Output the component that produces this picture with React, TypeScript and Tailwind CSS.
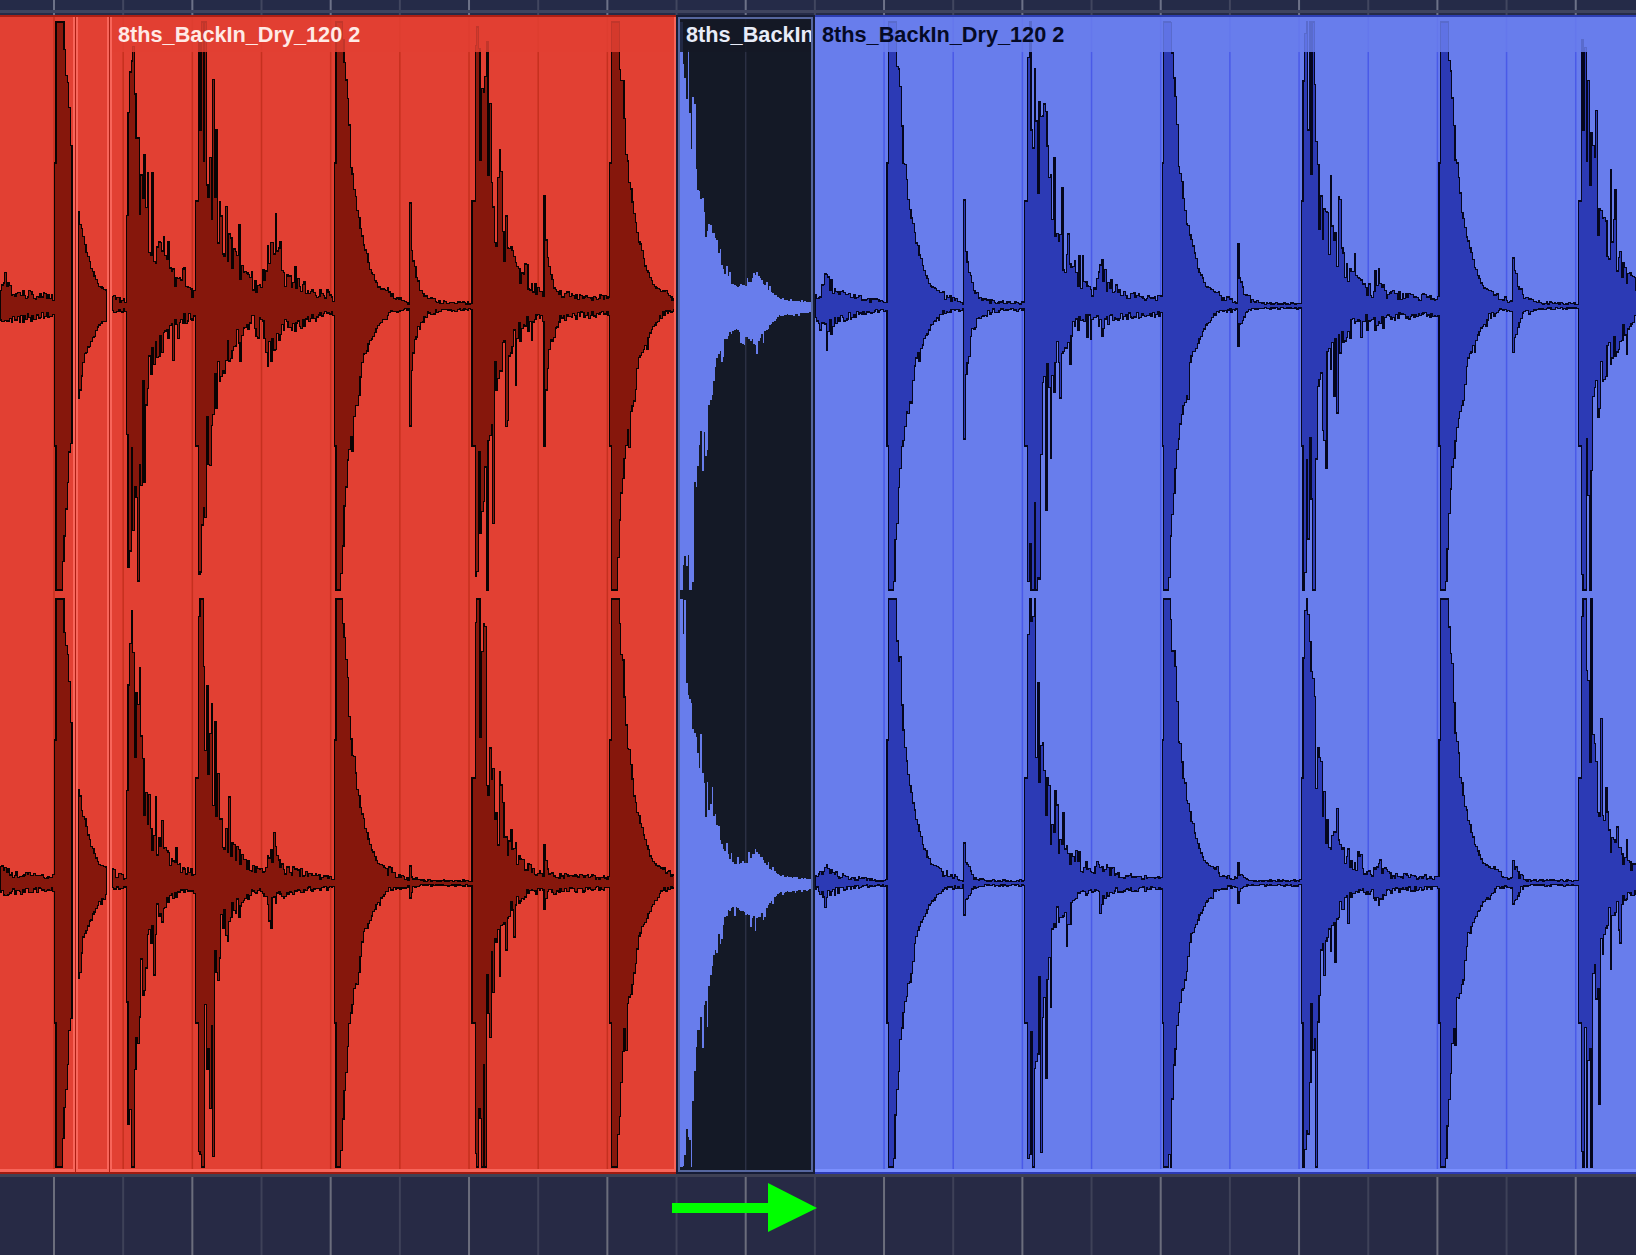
import React from "react";

// all wave coordinates are page pixels, the svg viewBox maps them onto each clip
const CENTERS = [306, 883];
const MAX_AMP = 284;
const GRID = Array.from({ length: 24 }, (_, i) => 54 + i * 69.17);

type Table = [number, number][];
type Kind = "kick" | "hit" | "spike" | "burst";
type Ev = { x: number; kind: Kind; amp: [number, number, number, number] };

const KICK_UP: Table = [[0, 143], [1.9, 143], [2, 284], [9, 284], [10, 250], [14, 215], [17, 147], [20, 127], [24, 92], [29, 67], [37, 37], [44, 20], [64, 8], [75, 4]];
const KICK_DOWN: Table = [[0, 140], [1.9, 140], [2, 284], [7, 284], [9, 243], [14, 160], [18, 120], [25, 93], [29, 53], [35, 40], [44, 20], [57, 6], [75, 4]];
const HIT_UP: Table = [[0, 105], [2.9, 105], [3, 225], [5, 284], [8, 284], [9, 235], [12, 200], [16, 150], [20, 115], [28, 85], [38, 60], [50, 35], [70, 14], [100, 11], [139, 8]];
const HIT_DOWN: Table = [[0, 140], [2.9, 140], [3, 284], [5, 262], [14, 160], [18, 125], [25, 80], [31, 60], [42, 40], [49, 24], [57, 15], [139, 8]];
const SPIKE: Table = [[0, 1], [1.5, 1], [1.6, 0.6], [3, 0.45], [8, 0.22], [15, 0.09], [30, 0.04], [63, 0.03]];
const BURST: Table = [[-12, 0.2], [-3, 0.6], [0, 1], [5, 0.65], [15, 0.35], [30, 0.25], [50, 0.16], [62, 0.1]];

const full: [number, number, number, number] = [1, 1, 1, 1];

const RED_EVENTS: Ev[] = [
  { x: -60, kind: "hit", amp: full },
  { x: 54, kind: "kick", amp: full },
  { x: 125, kind: "hit", amp: [0.86, 0.92, 0.88, 0.85] },
  { x: 194, kind: "hit", amp: full },
  { x: 270, kind: "burst", amp: [100, 65, 45, 32] },
  { x: 333, kind: "kick", amp: full },
  { x: 409, kind: "spike", amp: [103, 120, 17, 15] },
  { x: 471, kind: "hit", amp: full },
  { x: 544, kind: "spike", amp: [110, 140, 38, 26] },
  { x: 609, kind: "kick", amp: full },
];

const BLUE_EVENTS: Ev[] = [
  { x: 825, kind: "burst", amp: [35, 37, 22, 18] },
  { x: 886, kind: "kick", amp: full },
  { x: 963, kind: "spike", amp: [106, 133, 40, 32] },
  { x: 1024, kind: "hit", amp: full },
  { x: 1100, kind: "burst", amp: [43, 27, 30, 22] },
  { x: 1161, kind: "kick", amp: full },
  { x: 1236, kind: "spike", amp: [62, 40, 20, 20] },
  { x: 1300, kind: "hit", amp: full },
  { x: 1376, kind: "burst", amp: [30, 30, 22, 20] },
  { x: 1438, kind: "kick", amp: full },
  { x: 1511, kind: "spike", amp: [80, 77, 38, 35] },
  { x: 1577, kind: "hit", amp: full },
];

// the inverted piece under the selection, heights away from the centre line
const FADE_UP: Table = [[676, 284], [682, 284], [685, 200], [688, 196], [692, 161], [695, 151], [698, 116], [703, 111], [705, 71], [708, 81], [717, 61], [720, 40], [733, 19], [747, 21], [755, 34], [767, 16], [780, 6], [793, 4], [815, 3]];
const FADE_DOWN: Table = [[676, 284], [682, 284], [688, 261], [694, 194], [697, 154], [703, 121], [710, 101], [716, 54], [728, 27], [735, 24], [756, 37], [763, 27], [778, 9], [812, 5], [815, 4]];

function lookup(table: Table, x: number) {
  if (x < table[0][0] || x > table[table.length - 1][0]) return 0;
  for (let i = 1; i < table.length; i++) {
    const [x1, y1] = table[i - 1];
    const [x2, y2] = table[i];
    if (x <= x2) return y1 + ((y2 - y1) * (x - x1)) / (x2 - x1);
  }
  return 0;
}

function seeded(seed: number) {
  let a = seed;
  return () => {
    a = (a + 0x6d2b79f5) | 0;
    let t = Math.imul(a ^ (a >>> 15), 1 | a);
    t = (t + Math.imul(t ^ (t >>> 7), 61 | t)) ^ t;
    return ((t ^ (t >>> 14)) >>> 0) / 4294967296;
  };
}

function height(events: Ev[], x: number, ch: number, side: number): [number, Kind, number] {
  let best = 0;
  let kind: Kind = "burst";
  let at = 0;
  for (const ev of events) {
    const dx = x - ev.x;
    const idx = ch * 2 + side;
    let v = 0;
    if (ev.kind === "kick") v = lookup(side ? KICK_DOWN : KICK_UP, dx) * ev.amp[idx];
    if (ev.kind === "hit") {
      v = lookup(side ? HIT_DOWN : HIT_UP, dx) * ev.amp[idx];
      if (ch === 1 && dx > 25) v *= 0.68;
    }
    if (ev.kind === "spike") v = lookup(SPIKE, dx) * ev.amp[idx];
    if (ev.kind === "burst") v = lookup(BURST, dx) * ev.amp[idx];
    if (v > best) {
      best = v;
      kind = ev.kind;
      at = dx;
    }
  }
  return [best, kind, at];
}

function jag(v: number, kind: Kind, dx: number, side: number, r1: number, r2: number) {
  let out = Math.max(v, 2.5);
  if (out < 14) out *= 0.55 + r1 * 0.75;
  else if (kind === "burst") out *= r2 < 0.15 ? 1.2 + r1 * 0.3 : 0.5 + r1 * 0.6;
  else if (kind === "kick") {
    if (side && dx > 7 && r2 < 0.05) out *= 1.25;
    else out *= dx < 9 ? 1 : 0.95 + r1 * 0.1;
  } else if (kind === "hit") {
    if (dx > 5 && r2 < 0.2) out *= 1.25 + r1 * (side ? 1.2 : 0.7);
    else if (dx > 5 && r2 > 0.75) out *= 0.62;
    else if (dx > 5) out *= 0.9 + r1 * 0.2;
  } else if (dx > 3) out *= 0.8 + r1 * 0.4;
  return Math.min(out, MAX_AMP);
}

function wavePath(from: number, to: number, ch: number, amp: (x: number, side: number, r: () => number) => number) {
  const cy = CENTERS[ch];
  const r = seeded(from * 7 + ch * 131 + 5);
  const step = 1.6;
  const top: string[] = [];
  const bottom: string[] = [];
  for (let x = from; x < to; x += step) {
    const up = amp(x, 0, r);
    const down = amp(x, 1, r);
    top.push(`L${x.toFixed(2)} ${(cy - up).toFixed(1)} L${(x + step).toFixed(2)} ${(cy - up).toFixed(1)}`);
    bottom.unshift(`L${(x + step).toFixed(2)} ${(cy + down).toFixed(1)} L${x.toFixed(2)} ${(cy + down).toFixed(1)}`);
  }
  return `M${from} ${cy} ${top.join(" ")} ${bottom.join(" ")} Z`;
}

function eventAmp(events: Ev[], ch: number) {
  return (x: number, side: number, r: () => number) => {
    const [v, kind, dx] = height(events, x, ch, side);
    return jag(v, kind, dx, side, r(), r());
  };
}

function fadeAmp(x: number, side: number, r: () => number) {
  const v = lookup(side ? FADE_DOWN : FADE_UP, x);
  if (x < 682) return v;
  const a = r();
  const b = r();
  return Math.min(MAX_AMP, v * (b < 0.18 ? 1.3 : 0.9 + a * 0.15) + 1);
}

type ClipProps = {
  from: number;
  to: number;
  bg: string;
  grid: string;
  fill: string;
  stroke: string;
  ranges?: [number, number][];
  amp: (ch: number) => (x: number, side: number, r: () => number) => number;
  widthClass: string;
  frameClass: string;
  ringClass: string;
  stripClass?: string;
  labelClass?: string;
  label?: string;
};

function Clip(p: ClipProps) {
  const w = p.to - p.from;
  const ranges = p.ranges ?? [[p.from, p.to]];
  return (
    <div className={`relative shrink-0 h-full overflow-hidden ${p.widthClass} ${p.bg}`}>
      <svg className="absolute inset-0 w-full h-full" viewBox={`${p.from} 15 ${w} 1159`} preserveAspectRatio="none">
        {GRID.filter((g) => g > p.from && g < p.to).map((g) => (
          <rect key={g} x={g - 0.75} y={15} width={1.5} height={1159} fill={p.grid} />
        ))}
        {ranges.flatMap(([a, b]) =>
          CENTERS.map((_, ch) => (
            <path
              key={`${a}-${ch}`}
              d={wavePath(a, b, ch, p.amp(ch))}
              fill={p.fill}
              stroke={p.stroke}
              strokeWidth={p.stroke === "none" ? 0 : 1.3}
              shapeRendering="crispEdges"
            />
          ))
        )}
      </svg>
      {p.label && (
        <div className={`absolute inset-x-0 top-0 h-[37px] pt-[7px] overflow-hidden whitespace-nowrap text-[21.7px] leading-[26px] font-bold font-['Liberation_Sans',Arial,sans-serif] ${p.stripClass} ${p.labelClass}`}>
          {p.label}
        </div>
      )}
      <div className={`absolute inset-0 border-y-2 ${p.frameClass}`}>
        <div className={`w-full h-full ${p.ringClass}`} />
      </div>
    </div>
  );
}

function Ruler({ major, minor }: { major: string; minor: string }) {
  return (
    <svg className="absolute inset-0 w-full h-full" viewBox="0 0 1636 100" preserveAspectRatio="none">
      {GRID.map((g, i) => (
        <rect key={g} x={g - 1} y={0} width={2} height={100} fill={i % 2 === 0 ? major : minor} />
      ))}
    </svg>
  );
}

export default function App() {
  return (
    <div className="w-[1636px] h-[1255px] flex flex-col overflow-hidden bg-[#262a45]">
      {/* top ruler */}
      <div className="relative h-[15px] shrink-0 bg-[#252b48]">
        <Ruler major="#6d7288" minor="#41465f" />
        <div className="absolute inset-x-0 top-[10px] h-[3px] bg-[#3f445f]" />
      </div>

      {/* clips */}
      <div className="flex h-[1159px] shrink-0">
        <Clip
          from={0}
          to={75}
          ranges={[[0, 72]]}
          widthClass="w-[75px]"
          bg="bg-[#e24033]"
          grid="#c5301f"
          fill="#86170c"
          stroke="#0a0303"
          amp={(ch) => eventAmp(RED_EVENTS, ch)}
          frameClass="border-t-[#ab1f13] border-b-[#a01a10]"
          ringClass="border-b-[3px] border-r-2 border-r-[#f8655a] border-b-[#f8655a]"
        />
        <Clip
          from={75}
          to={110}
          ranges={[[78, 106]]}
          widthClass="w-[35px]"
          bg="bg-[#e24033]"
          grid="#c5301f"
          fill="#86170c"
          stroke="#0a0303"
          amp={(ch) => eventAmp(RED_EVENTS, ch)}
          frameClass="border-t-[#ab1f13] border-b-[#a01a10] border-l border-l-[#ab1f13] border-r border-r-[#ab1f13]"
          ringClass="border-b-[3px] border-x-2 border-x-[#f8655a] border-b-[#f8655a]"
        />
        <Clip
          from={110}
          to={676}
          ranges={[[112, 674]]}
          widthClass="w-[566px]"
          bg="bg-[#e24033]"
          grid="#c5301f"
          fill="#86170c"
          stroke="#0a0303"
          amp={(ch) => eventAmp(RED_EVENTS, ch)}
          frameClass="border-t-[#ab1f13] border-b-[#a01a10]"
          ringClass="border-b-[3px] border-x-2 border-x-[#f8655a] border-b-[#f8655a]"
          stripClass="bg-[#e24033]/85 pl-[8px]"
          labelClass="text-[#ffeae6]"
          label="8ths_BackIn_Dry_120 2"
        />
        <Clip
          from={676}
          to={815}
          ranges={[[678, 813]]}
          widthClass="w-[139px]"
          bg="bg-[#141926]"
          grid="#2b3044"
          fill="#687dec"
          stroke="none"
          amp={() => fadeAmp}
          frameClass="border-[#161c35] border-x-2"
          ringClass="border-2 border-[#56669e]"
          stripClass="bg-[#141926]/85 pl-[10px]"
          labelClass="text-[#e8ecf8]"
          label="8ths_BackIn"
        />
        <Clip
          from={815}
          to={1636}
          widthClass="w-[821px]"
          bg="bg-[#687dec]"
          grid="#4a5ae8"
          fill="#2c3ab5"
          stroke="#05071f"
          amp={(ch) => eventAmp(BLUE_EVENTS, ch)}
          frameClass="border-t-[#2c3db0] border-b-[#2c3ab5]"
          ringClass="border-b-[3px] border-b-[#7b90ff]"
          stripClass="bg-[#687dec]/85 pl-[7px]"
          labelClass="text-[#050a25]"
          label="8ths_BackIn_Dry_120 2"
        />
      </div>

      {/* bottom ruler */}
      <div className="relative flex-1 bg-[#272a45]">
        <Ruler major="#6b6d7c" minor="#3e4158" />
        <div className="absolute inset-x-0 top-0 h-[3px] bg-[#3e4054]" />
        {/* green arrow */}
        <svg className="absolute left-[672px] top-[9px] w-[146px] h-[50px]" viewBox="672 1183 146 50">
          <path d="M672 1203 H768 V1183 L817 1208 L768 1232 V1213 H672 Z" fill="#00ff00" />
        </svg>
      </div>
    </div>
  );
}
